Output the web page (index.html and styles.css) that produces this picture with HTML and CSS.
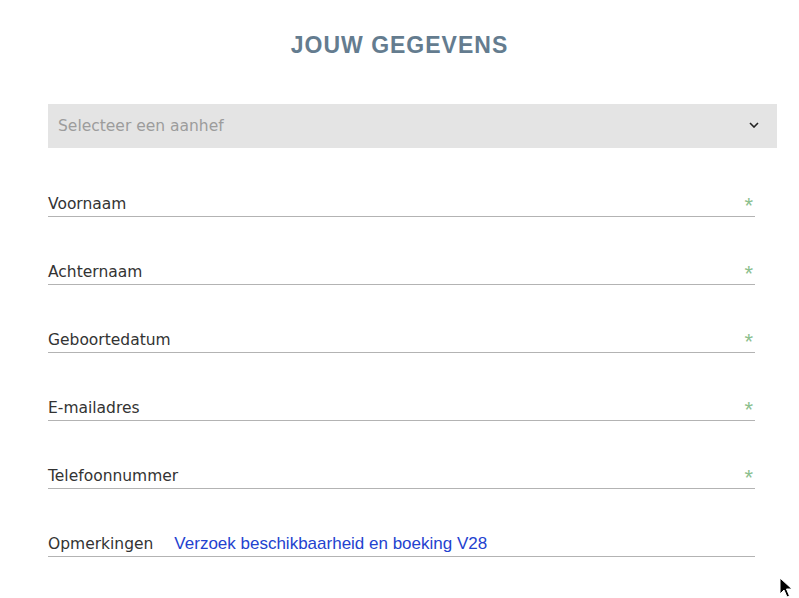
FILE: index.html
```html
<!DOCTYPE html>
<html lang="nl">
<head>
<meta charset="utf-8">
<title>Jouw gegevens</title>
<link rel="stylesheet" href="styles.css">
</head>
<body>
<main class="page">
  <h1 class="title">JOUW GEGEVENS</h1>
  <form class="form">
    <div class="select">
      <span class="select-text">Selecteer een aanhef</span>
      <svg class="chevron" width="10" height="6" viewBox="0 0 10 6"><path d="M1 1 L5 5 L9 1" fill="none" stroke="#222" stroke-width="1.6"/></svg>
    </div>
    <div class="fields">
      <div class="field"><span class="label">Voornaam</span><span class="req">*</span></div>
      <div class="field"><span class="label">Achternaam</span><span class="req">*</span></div>
      <div class="field"><span class="label">Geboortedatum</span><span class="req">*</span></div>
      <div class="field"><span class="label">E-mailadres</span><span class="req">*</span></div>
      <div class="field"><span class="label">Telefoonnummer</span><span class="req">*</span></div>
      <div class="field"><span class="label">Opmerkingen</span><span class="value">Verzoek beschikbaarheid en boeking V28</span></div>
    </div>
  </form>
  <svg class="cursor" width="14" height="22" viewBox="0 0 14 22"><path d="M1 1 L1 17 L5 13 L8 20 L10.5 19 L7.5 12 L13 12 Z" fill="#000" stroke="#fff" stroke-width="1"/></svg>
</main>
</body>
</html>
```
FILE: styles.css
```css
html, body {
  margin: 0;
  padding: 0;
  background: #fff;
}
.page {
  position: relative;
  width: 799px;
  height: 598px;
  overflow: hidden;
  font-family: "DejaVu Sans", sans-serif;
}
.title {
  margin: 0;
  padding-top: 31px;
  height: 104px;
  box-sizing: border-box;
  text-align: center;
  font-family: "Liberation Sans", Arial, sans-serif;
  font-weight: 700;
  font-size: 23px;
  line-height: 28px;
  letter-spacing: 1px;
  color: #647c8f;
}
.form {
  margin-left: 48px;
  width: 729px;
}
.select {
  height: 44px;
  background: #e4e4e4;
  display: flex;
  align-items: center;
  justify-content: space-between;
  padding: 0 18px 0 10px;
}
.select-text {
  font-size: 15.5px;
  color: #9c9c9c;
}
.chevron {
  display: block;
  margin-top: -2px;
}
.fields {
  padding-top: 1px;
}
.field {
  box-sizing: border-box;
  height: 68px;
  width: 707px;
  border-bottom: 1px solid #b3b3b3;
  display: flex;
  align-items: flex-end;
  padding-bottom: 2px;
}
.label {
  font-size: 15.5px;
  line-height: 20px;
  color: #333;
}
.req {
  margin-left: auto;
  margin-right: 2px;
  margin-bottom: -2px;
  font-family: "Liberation Sans", Arial, sans-serif;
  font-size: 22px;
  line-height: 20px;
  color: #8cc08e;
}
.value {
  margin-left: 21px;
  font-family: "Liberation Sans", Arial, sans-serif;
  font-size: 17px;
  line-height: 20px;
  color: #2342cf;
}
.cursor {
  position: absolute;
  left: 779px;
  top: 577px;
}
```
